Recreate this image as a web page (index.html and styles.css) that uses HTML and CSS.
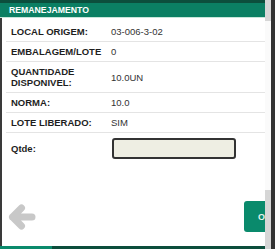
FILE: index.html
```html
<!DOCTYPE html>
<html>
<head>
<meta charset="utf-8">
<link rel="stylesheet" href="styles.css">
</head>
<body>
<div class="screen">
  <div class="main">
    <div class="topbar"></div>
    <div class="header">REMANEJAMENTO</div>
    <div class="content">
      <table class="info">
        <tr><th>LOCAL ORIGEM:</th><td>03-006-3-02</td></tr>
        <tr><th>EMBALAGEM/LOTE</th><td>0</td></tr>
        <tr><th>QUANTIDADE<br>DISPONIVEL:</th><td>10.0UN</td></tr>
        <tr><th>NORMA:</th><td>10.0</td></tr>
        <tr><th>LOTE LIBERADO:</th><td>SIM</td></tr>
      </table>
      <div class="qtde-row">
        <label class="qtde-label">Qtde:</label>
        <input class="qtde-input" type="text">
      </div>
      <div class="footer">
        <svg class="back" width="28" height="28" viewBox="0 0 28 28">
          <path d="M4.5 14 L13.5 5 M4.5 14 L13.5 23 M4.5 14 H24" fill="none" stroke="#c8c8c8" stroke-width="7" stroke-linecap="round" stroke-linejoin="round"/>
        </svg>
        <button class="ok">OK</button>
      </div>
    </div>
    <div class="bottombar"><span class="seg-a"></span><span class="seg-b"></span></div>
  </div>
  <div class="scroll">
    <div class="thumb-top"></div>
    <div class="track"></div>
    <div class="thumb-bottom"></div>
  </div>
  <div class="edge"></div>
</div>
</body>
</html>
```

FILE: styles.css
```css
html, body {
  margin: 0;
  padding: 0;
}
body {
  width: 275px;
  height: 249px;
  overflow: hidden;
  background: #fff;
  font-family: "Liberation Sans", Arial, sans-serif;
}
.screen {
  display: flex;
  width: 275px;
  height: 249px;
}
.main {
  width: 265px;
  display: flex;
  flex-direction: column;
  overflow: hidden;
}
.topbar {
  height: 3px;
  background: #0c4e3c;
}
.header {
  height: 14px;
  line-height: 14px;
  background: #0b7f63;
  color: #fff;
  font-weight: bold;
  font-size: 8.7px;
  padding-left: 9px;
  border-bottom: 1px solid #c6e6da;
}
.content {
  flex: 1;
  border-left: 2px solid #3a3a3a;
  display: flex;
  flex-direction: column;
  min-height: 0;
}
.info {
  border-collapse: collapse;
  margin: 4px 0 0 4px;
  width: 259px;
  font-size: 9.5px;
}
.info th, .info td {
  padding: 4px 0;
  line-height: 11px;
  border-bottom: 1px solid #e4e4e4;
  vertical-align: middle;
  text-align: left;
}
.info th {
  width: 100px;
  padding-left: 5px;
  color: #1e1e1e;
  font-weight: bold;
}
.info td {
  color: #333;
  font-weight: normal;
}
.qtde-row {
  display: flex;
  align-items: center;
  padding: 5px 0;
  margin-left: 4px;
}
.qtde-label {
  width: 100px;
  padding-left: 5px;
  font-size: 9.5px;
  font-weight: bold;
  color: #1e1e1e;
}
.qtde-input {
  box-sizing: border-box;
  width: 124px;
  height: 21px;
  margin: 0;
  margin-left: 1px;
  background: #eeeee3;
  border: 2px solid #333;
  border-radius: 3px;
  padding: 0;
}
.footer {
  margin-top: 37px;
  height: 31px;
  display: flex;
  align-items: center;
  justify-content: space-between;
  padding-left: 6px;
}
.back {
  display: block;
}
.ok {
  width: 40px;
  height: 31px;
  margin-right: -19px;
  background: #0a8a6c;
  color: #e6f4ef;
  border: none;
  border-radius: 3px;
  font-family: "Liberation Sans", Arial, sans-serif;
  font-weight: bold;
  font-size: 9px;
  text-align: left;
  padding: 0 0 0 14px;
}
.bottombar {
  height: 3px;
  display: flex;
}
.seg-a {
  width: 52px;
  background: #0a8a6c;
}
.seg-b {
  flex: 1;
  background: #0c4e3c;
}
.scroll {
  width: 6px;
  display: flex;
  flex-direction: column;
}
.thumb-top {
  height: 21px;
  background: #d6d6d6;
}
.track {
  flex: 1;
  background: #fafafa;
}
.thumb-bottom {
  height: 59px;
  background: #d6d6d6;
}
.edge {
  width: 4px;
  background: #333;
}
```
